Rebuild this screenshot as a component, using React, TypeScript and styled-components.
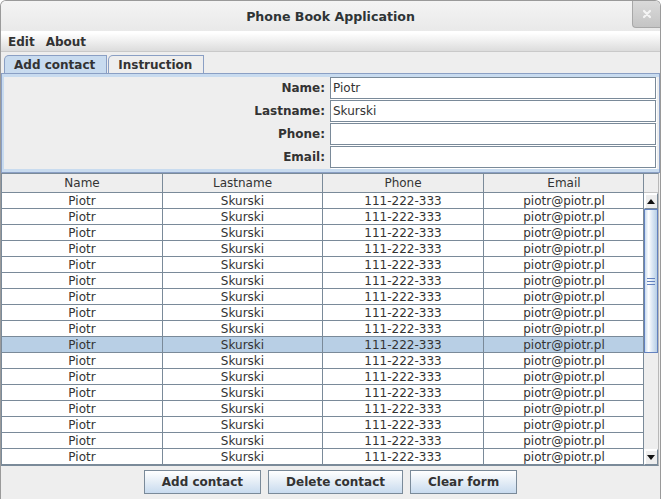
import styled, { createGlobalStyle } from "styled-components"

const GlobalStyle = createGlobalStyle`
  html, body {
    margin: 0;
    padding: 0;
    background: #ffffff;
  }
  body {
    font-family: "DejaVu Sans", "Liberation Sans", sans-serif;
    font-size: 12px;
    color: #333333;
  }
  * {
    box-sizing: border-box;
  }
`

interface Contact {
  name: string
  lastname: string
  phone: string
  email: string
}

const contacts: Contact[] = Array.from({ length: 17 }, () => ({
  name: "Piotr",
  lastname: "Skurski",
  phone: "111-222-333",
  email: "piotr@piotr.pl"
}))

const SELECTED_ROW = 9

const formFields = [
  { label: "Name:", value: "Piotr" },
  { label: "Lastname:", value: "Skurski" },
  { label: "Phone:", value: "" },
  { label: "Email:", value: "" }
]

function App() {
  return (
    <>
      <GlobalStyle />
      <Window>
        <TitleBar>
          <span />
          <Title>Phone Book Application</Title>
          <CloseButton>
            <svg width="10" height="10" viewBox="0 0 10 10">
              <path d="M2 2 L8 8 M8 2 L2 8" stroke="#f4f4f4" strokeWidth="2.2" strokeLinecap="round" />
            </svg>
          </CloseButton>
        </TitleBar>

        <MenuBar>
          <MenuItem>Edit</MenuItem>
          <MenuItem>About</MenuItem>
        </MenuBar>

        <TabStrip>
          <Tab $active>Add contact</Tab>
          <Tab>Instruction</Tab>
        </TabStrip>

        <TabPanel>
          <Form>
            {formFields.map(({ label, value }) => (
              <FormRow key={label}>
                <FieldLabel>{label}</FieldLabel>
                <TextField defaultValue={value} />
              </FormRow>
            ))}
          </Form>
        </TabPanel>

        <ScrollPane>
          <TableArea>
            <HeaderRow>
              <HeaderCell>Name</HeaderCell>
              <HeaderCell>Lastname</HeaderCell>
              <HeaderCell>Phone</HeaderCell>
              <HeaderCell>Email</HeaderCell>
            </HeaderRow>
            <TableBody>
              {contacts.map((c, i) => (
                <Row key={i} $selected={i === SELECTED_ROW}>
                  <Cell>{c.name}</Cell>
                  <Cell>{c.lastname}</Cell>
                  <Cell>{c.phone}</Cell>
                  <Cell>{c.email}</Cell>
                </Row>
              ))}
            </TableBody>
          </TableArea>
          <ScrollColumn>
            <Corner />
            <ScrollBar>
              <ArrowButton>
                <svg width="8" height="5" viewBox="0 0 8 5">
                  <path d="M0 5 L4 0 L8 5 Z" fill="#111" />
                </svg>
              </ArrowButton>
              <Track>
                <Thumb>
                  <Grip>
                    <span />
                    <span />
                    <span />
                  </Grip>
                </Thumb>
              </Track>
              <ArrowButton>
                <svg width="8" height="5" viewBox="0 0 8 5">
                  <path d="M0 0 L8 0 L4 5 Z" fill="#111" />
                </svg>
              </ArrowButton>
            </ScrollBar>
          </ScrollColumn>
        </ScrollPane>

        <ButtonBar>
          <Button>Add contact</Button>
          <Button>Delete contact</Button>
          <Button>Clear form</Button>
        </ButtonBar>
      </Window>
    </>
  )
}

const Window = styled.div`
  display: flex;
  flex-direction: column;
  width: 661px;
  height: 499px;
  overflow: hidden;
  background: #eeeeee;
  border: 1px solid #9a9a9a;
  border-bottom: none;
  border-radius: 6px 6px 0 0;
`

const TitleBar = styled.div`
  display: grid;
  grid-template-columns: 1fr auto 1fr;
  align-items: start;
  height: 30px;
  flex: none;
  background: linear-gradient(#f4f4f4, #e9e9e9);
`

const Title = styled.div`
  padding-top: 8px;
  font-size: 12.6px;
  font-weight: bold;
  color: #2e3436;
`

const CloseButton = styled.div`
  justify-self: end;
  display: flex;
  align-items: center;
  justify-content: center;
  width: 28px;
  height: 28px;
  margin-top: -1px;
  background: linear-gradient(#dadada, #c4c4c4);
  border: 1px solid #a8a8a8;
  border-right: none;
  border-radius: 0 0 0 4px;
`

const MenuBar = styled.div`
  display: flex;
  gap: 11px;
  height: 21px;
  flex: none;
  padding: 3px 7px 0;
  background: linear-gradient(#ffffff 10%, #dcdcdc);
  border-bottom: 1px solid #c9c9c9;
`

const MenuItem = styled.span`
  font-weight: bold;
  line-height: 17px;
  color: #333333;
`

const TabStrip = styled.div`
  display: flex;
  gap: 1px;
  height: 18px;
  flex: none;
  margin-top: 3px;
  padding-left: 3px;
`

const Tab = styled.div<{ $active?: boolean }>`
  display: flex;
  align-items: center;
  height: 18px;
  padding: 0 11px 0 9px;
  font-weight: bold;
  color: #333333;
  background: ${({ $active }) => ($active ? "#c8dbef" : "#eeeeee")};
  border: 1px solid #8a9fc4;
  border-bottom: none;
  border-top-left-radius: 5px;
`

const TabPanel = styled.div`
  height: 100px;
  flex: none;
  padding: 3px 3px 4px 0;
  border: 1px solid #8a9fc4;
  box-shadow: inset 0 3px 0 #c8dbef, inset 0 -3px 0 #c8dbef, inset 2px 0 0 #c8dbef;
`

const Form = styled.div`
  display: flex;
  flex-direction: column;
  gap: 1px;
`

const FormRow = styled.div`
  display: grid;
  grid-template-columns: 1fr 326px;
  column-gap: 5px;
  align-items: center;
`

const FieldLabel = styled.label`
  font-weight: bold;
  text-align: right;
  color: #333333;
`

const TextField = styled.input`
  height: 22px;
  padding: 0 2px;
  font-family: "DejaVu Sans", sans-serif;
  font-size: 12px;
  color: #333333;
  background: #ffffff;
  border: 1px solid #7a8a99;
  box-shadow: inset 1px 1px 0 #ffffff, 1px 1px 0 #ffffff;
  outline: none;
`

const ScrollPane = styled.div`
  display: flex;
  height: 293px;
  flex: none;
  margin: 0 1px 0 0;
  border: 1px solid #7a8a99;
  border-right-color: #b8b8b8;
`

const TableArea = styled.div`
  display: flex;
  flex-direction: column;
  width: 642px;
  border-right: 1px solid #7a8a99;
`

const columns = "161px 160px 161px 160px"

const HeaderRow = styled.div`
  display: grid;
  grid-template-columns: ${columns};
  height: 19px;
  flex: none;
  background: #eeeeee;
  border-bottom: 1px solid #7a8a99;
`

const HeaderCell = styled.div`
  line-height: 18px;
  text-align: center;
  color: #333333;
  border-right: 1px solid #7a8a99;
  &:last-child {
    border-right: none;
  }
`

const TableBody = styled.div`
  flex: 1;
  overflow: hidden;
  background: #ffffff;
`

const Row = styled.div<{ $selected?: boolean }>`
  display: grid;
  grid-template-columns: ${columns};
  height: 16px;
  background: ${({ $selected }) => ($selected ? "#b8cfe5" : "#ffffff")};
  border-bottom: 1px solid #7a8a99;
`

const Cell = styled.div`
  padding-top: 1px;
  line-height: 14px;
  text-align: center;
  color: #333333;
  border-right: 1px solid #7a8a99;
  &:last-child {
    border-right: none;
  }
`

const ScrollColumn = styled.div`
  display: flex;
  flex-direction: column;
  width: 16px;
`

const Corner = styled.div`
  height: 19px;
  flex: none;
  background: #eeeeee;
  border-bottom: 1px solid #c4c4c4;
`

const ScrollBar = styled.div`
  display: flex;
  flex-direction: column;
  flex: 1;
  background: #eeeeee;
`

const ArrowButton = styled.div`
  display: flex;
  align-items: center;
  justify-content: center;
  height: 16px;
  flex: none;
  background: #eeeeee;
  border: 1px solid #7a8a99;
  border-left-color: #ffffff;
  border-top-color: #ffffff;
  box-shadow: inset 1px 1px 0 #ffffff;
`

const Track = styled.div`
  flex: 1;
`

const Thumb = styled.div`
  display: flex;
  align-items: center;
  justify-content: center;
  height: 144px;
  background: linear-gradient(90deg, #c8dbef 0%, #ffffff 30%, #dce8f5 60%, #b8cfe5 100%);
  border: 1px solid #6382bf;
`

const Grip = styled.div`
  display: flex;
  flex-direction: column;
  gap: 2px;

  span {
    display: block;
    width: 8px;
    height: 1px;
    background: #6382bf;
  }
`

const ButtonBar = styled.div`
  display: flex;
  justify-content: center;
  align-items: flex-start;
  gap: 7px;
  flex: 1;
  padding-top: 4px;
`

const Button = styled.button`
  height: 24px;
  padding: 0 17px;
  font-family: "DejaVu Sans", sans-serif;
  font-size: 12px;
  font-weight: bold;
  line-height: 22px;
  color: #333333;
  background: linear-gradient(#ffffff 0%, #e4edf6 50%, #c8dbef 100%);
  border: 1px solid #7a8a99;
  border-radius: 0;
`

export default App
